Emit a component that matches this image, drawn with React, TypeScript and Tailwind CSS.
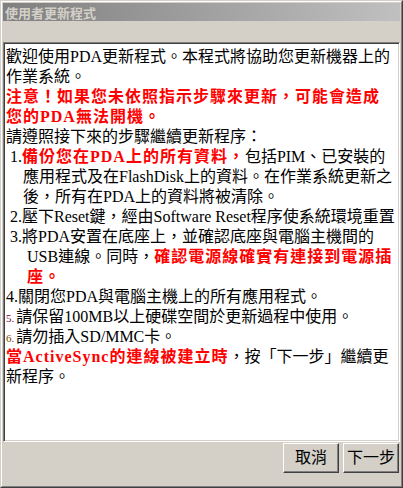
import React from 'react';

const FONT = '"Liberation Serif", "Noto Sans CJK TC", serif';

// red bold emphasis, the bitmap bold is one pixel wider per glyph
const Em = ({ children }: { children: React.ReactNode }) => (
  <span className="font-bold text-[#ff0000] tracking-[1px]">{children}</span>
);

const Line = ({ children, indent = 0 }: { children: React.ReactNode; indent?: number }) => (
  <div className="whitespace-nowrap h-[20px]" style={indent ? { paddingLeft: indent } : undefined}>
    {children}
  </div>
);

const Button = ({ label }: { label: string }) => (
  <button
    className="w-[56px] h-[30px] bg-[#d4d0c8] border border-t-white border-l-white border-r-[#404040] border-b-[#404040] shadow-[inset_-1px_-1px_0_#808080] text-[16px] text-black leading-none"
    style={{ fontFamily: FONT }}
  >
    {label}
  </button>
);

export default function App() {
  return (
    <div className="w-[403px] h-[488px] border border-t-[#d4d0c8] border-l-[#d4d0c8] border-r-[#404040] border-b-[#404040] bg-[#d4d0c8]">
      <div className="h-full border border-t-white border-l-white border-r-[#808080] border-b-[#808080] p-px flex flex-col">
        {/* title bar (inactive) */}
        <div className="h-[18px] bg-gradient-to-r from-[#808080] to-[#c0c0c0] flex items-center pl-[2px]">
          <span
            className="text-[13px] font-bold text-[#d4d0c8] leading-none"
            style={{ fontFamily: '"Noto Sans CJK TC", sans-serif' }}
          >
            使用者更新程式
          </span>
        </div>

        {/* message box */}
        <div
          className="mt-[21px] h-[400px] bg-white border border-t-[#808080] border-l-[#808080] border-r-white border-b-white shadow-[inset_1px_1px_0_#404040,inset_-1px_-1px_0_#d4d0c8] overflow-hidden pt-[4px] pl-[2px] text-[16px] leading-[20px] text-black"
          style={{ fontFamily: FONT }}
        >
          <Line>歡迎使用PDA更新程式。本程式將協助您更新機器上的</Line>
          <Line>作業系統。</Line>
          <Line><Em>注意！如果您未依照指示步驟來更新，可能會造成</Em></Line>
          <Line><Em>您的PDA無法開機。</Em></Line>
          <Line>請遵照接下來的步驟繼續更新程序：</Line>
          <Line indent={4}>1.<Em>備份您在PDA上的所有資料，</Em>包括PIM、已安裝的</Line>
          <Line indent={17}>應用程式及在FlashDisk上的資料。在作業系統更新之</Line>
          <Line indent={17}>後，所有在PDA上的資料將被清除。</Line>
          <Line indent={4}>2.壓下Reset鍵，經由Software Reset程序使系統環境重置。</Line>
          <Line indent={4}>3.將PDA安置在底座上，並確認底座與電腦主機間的</Line>
          <Line indent={21}>USB連線。同時，<Em>確認電源線確實有連接到電源插</Em></Line>
          <Line indent={21}><Em>座。</Em></Line>
          <Line>4.關閉您PDA與電腦主機上的所有應用程式。</Line>
          <Line><span className="text-[11px] text-[#800040] mr-[2px]">5.</span>請保留100MB以上硬碟空間於更新過程中使用。</Line>
          <Line><span className="text-[11px] text-[#804000] mr-[2px]">6.</span>請勿插入SD/MMC卡。</Line>
          <Line><Em>當ActiveSync的連線被建立時</Em>，按「下一步」繼續更</Line>
          <Line>新程序。</Line>
        </div>

        <div className="mt-[1px] flex justify-end gap-[4px] pr-[1px]">
          <Button label="取消" />
          <Button label="下一步" />
        </div>
      </div>
    </div>
  );
}
